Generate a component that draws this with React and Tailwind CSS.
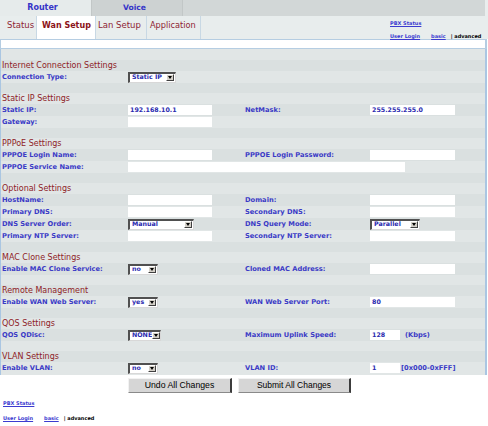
import React from "react";

const LBL = "text-[6.7px] font-bold text-[#3a3ac6] leading-none whitespace-nowrap";
const VAL = "text-[6.3px] font-bold text-[#2b2bb0] leading-none whitespace-nowrap";

function Input({ w, value }) {
  return (
    <div className={`${w} h-[10px] bg-white flex items-center pl-[2px]`}>
      {value ? <span className={VAL}>{value}</span> : null}
    </div>
  );
}

function Select({ w, value }) {
  return (
    <div
      className={`${w} h-[11px] bg-white border-t-2 border-l-2 border-b border-r border-t-[#505050] border-l-[#505050] border-b-[#d8d8d8] border-r-[#d8d8d8] flex items-center`}
    >
      <span className={`flex-1 pl-[2px] ${VAL}`}>{value}</span>
      <span className="w-[8px] h-[7px] mr-[1px] shrink-0 bg-[#d4d0c8] border-t border-l border-b border-r border-t-white border-l-white border-b-[#404040] border-r-[#404040] flex items-center justify-center">
        <svg width="4" height="3" viewBox="0 0 4 3">
          <polygon points="0,0 4,0 2,3" fill="#000" />
        </svg>
      </span>
    </div>
  );
}

const sections = [
  {
    title: "Internet Connection Settings",
    rows: [
      ["Connection Type:", <Select w="w-[48px]" value="Static IP" />, null, null],
    ],
  },
  {
    title: "Static IP Settings",
    rows: [
      ["Static IP:", <Input w="w-[84px]" value="192.168.10.1" />, "NetMask:", <Input w="w-[85px]" value="255.255.255.0" />],
      ["Gateway:", <Input w="w-[84px]" />, null, null],
    ],
  },
  {
    title: "PPPoE Settings",
    rows: [
      ["PPPOE Login Name:", <Input w="w-[84px]" />, "PPPOE Login Password:", <Input w="w-[85px]" />],
      ["PPPOE Service Name:", "wide", null, null],
    ],
  },
  {
    title: "Optional Settings",
    rows: [
      ["HostName:", <Input w="w-[84px]" />, "Domain:", <Input w="w-[85px]" />],
      ["Primary DNS:", <Input w="w-[84px]" />, "Secondary DNS:", <Input w="w-[85px]" />],
      ["DNS Server Order:", <Select w="w-[66px]" value="Manual" />, "DNS Query Mode:", <Select w="w-[50px]" value="Parallel" />],
      ["Primary NTP Server:", <Input w="w-[84px]" />, "Secondary NTP Server:", <Input w="w-[85px]" />],
    ],
  },
  {
    title: "MAC Clone Settings",
    rows: [
      ["Enable MAC Clone Service:", <Select w="w-[30px]" value="no" />, "Cloned MAC Address:", <Input w="w-[85px]" />],
    ],
  },
  {
    title: "Remote Management",
    rows: [
      ["Enable WAN Web Server:", <Select w="w-[30px]" value="yes" />, "WAN Web Server Port:", <Input w="w-[85px]" value="80" />],
    ],
  },
  {
    title: "QOS Settings",
    rows: [
      [
        "QOS QDisc:",
        <Select w="w-[33px]" value="NONE" />,
        "Maximum Uplink Speed:",
        <div className="flex items-center">
          <Input w="w-[30px]" value="128" />
          <span className={`ml-[5px] ${LBL}`}>(Kbps)</span>
        </div>,
      ],
    ],
  },
  {
    title: "VLAN Settings",
    rows: [
      [
        "Enable VLAN:",
        <Select w="w-[30px]" value="no" />,
        "VLAN ID:",
        <div className="flex items-center">
          <Input w="w-[30px]" value="1" />
          <span className={`ml-[1px] ${LBL}`}>[0x000-0xFFF]</span>
        </div>,
      ],
    ],
  },
];

const STRIPE_A = "bg-[#e1e6e6]";
const STRIPE_B = "bg-[#dae0e0]";

export default function App() {
  const rows = [];
  let idx = 0;
  const stripe = () => (idx++ % 2 === 0 ? STRIPE_A : STRIPE_B);
  rows.push(<div key="blank" className={`h-[11px] ${stripe()}`} />);
  sections.forEach((s, si) => {
    rows.push(
      <div key={`h${si}`} className={`h-[11px] flex items-center pl-[1px] ${stripe()}`}>
        <span className="text-[8px] text-[#8e1c26] leading-none whitespace-nowrap">{s.title}</span>
      </div>
    );
    s.rows.forEach((r, ri) => {
      const [l1, f1, l2, f2] = r;
      rows.push(
        <div
          key={`r${si}-${ri}`}
          className={`h-[12px] flex items-center leading-none text-[6.7px] ${stripe()}`}
        >
          <div className="w-[127px] pl-[1px] flex items-center">
            <span className={LBL}>{l1}</span>
          </div>
          {f1 === "wide" ? (
            <div className="flex items-center">
              <Input w="w-[277px]" />
            </div>
          ) : (
            <>
              <div className="w-[117px] flex items-center">{f1}</div>
              <div className="w-[125px] flex items-center">
                {l2 ? <span className={LBL}>{l2}</span> : null}
              </div>
              <div className="flex-1 flex items-center">{f2}</div>
            </>
          )}
        </div>
      );
    });
    if (si < sections.length - 1) {
      rows.push(<div key={`s${si}`} className={`h-[10px] ${stripe()}`} />);
    }
  });

  return (
    <div className="w-[488px] h-[426px] bg-white overflow-hidden leading-none font-['DejaVu_Sans',Verdana,sans-serif]">
      {/* top tabs */}
      <div className="flex h-[16px] bg-[#d2d7d7]">
        <div className="w-[91px] bg-[#e6ebeb] flex items-center justify-center pr-[6px] text-[8px] font-bold text-[#3535c8] leading-none">
          Router
        </div>
        <div className="w-[92px] bg-[#cdd2d2] border-x border-[#c2c7c7] flex items-center justify-center pr-[5px] text-[7.6px] font-bold text-[#3535c8] leading-none">
          Voice
        </div>
        <div className="flex-1" />
        <div className="w-[3px] bg-[#e9eded]" />
      </div>

      {/* sub tabs */}
      <div className="flex h-[23px] bg-[#e8eded]">
        <div className="w-[36px] pl-[7px] pt-[5px] text-[8.5px] text-[#8e2434] leading-[9px]">Status</div>
        <div className="w-[60px] bg-white border-x border-[#c8d8e4] pl-[5px] pt-[5px] text-[8px] font-bold text-[#8b1218] leading-[9px] whitespace-nowrap">
          Wan Setup
        </div>
        <div className="w-[51px] border-r border-[#c8d8e4] pl-[2px] pt-[5px] text-[8.5px] text-[#8e2434] leading-[9px] whitespace-nowrap">
          Lan Setup
        </div>
        <div className="w-[54px] border-r border-[#c8d8e4] pl-[3px] pt-[5px] text-[8.2px] text-[#8e2434] leading-[9px] whitespace-nowrap">
          Application
        </div>
        <div className="flex-1" />
        <div className="w-[98px] flex flex-col pt-[4px] text-[5px] leading-[6px] whitespace-nowrap">
          <a className="text-[#3b3bd0] underline font-bold">PBX Status</a>
          <div className="mt-[7px] flex">
            <a className="text-[#3b3bd0] underline font-bold">User Login</a>
            <a className="ml-[11px] text-[#3b3bd0] underline font-bold">basic</a>
            <span className="ml-[5px] text-black font-bold">| advanced</span>
          </div>
        </div>
      </div>

      {/* white bar */}
      <div className="w-[487px] h-[10px] bg-white border-t border-b border-l border-r-2 border-[#b5cde2]" />

      {/* main */}
      <div className="w-[487px] border-l border-r-2 border-[#aac6e2] flex flex-col">
        {rows}
        <div className={`h-[1px] ${STRIPE_A}`} />
      </div>

      {/* buttons */}
      <div className="flex mt-[3px] ml-[128px] gap-[6px] font-['Liberation_Sans',Arial,sans-serif]">
        <div className="w-[104px] h-[15px] bg-[#d6d6d6] border-t border-l border-[#f2f2f2] border-r-2 border-r-[#3c3c3c] border-b border-b-[#8a8a8a] flex items-center justify-center text-[8.7px] text-black leading-none">
          Undo All Changes
        </div>
        <div className="w-[113px] h-[15px] bg-[#d6d6d6] border-t border-l border-[#f2f2f2] border-r-2 border-r-[#3c3c3c] border-b border-b-[#8a8a8a] flex items-center justify-center text-[8.5px] text-black leading-none">
          Submit All Changes
        </div>
      </div>

      {/* footer */}
      <div className="pl-[3px] text-[5px] leading-[6px] whitespace-nowrap">
        <div className="mt-[7px]">
          <a className="text-[#3b3bd0] underline font-bold">PBX Status</a>
        </div>
        <div className="mt-[9px] flex">
          <a className="text-[#3b3bd0] underline font-bold">User Login</a>
          <a className="ml-[11px] text-[#3b3bd0] underline font-bold">basic</a>
          <span className="ml-[5px] text-black font-bold">| advanced</span>
        </div>
      </div>
    </div>
  );
}
